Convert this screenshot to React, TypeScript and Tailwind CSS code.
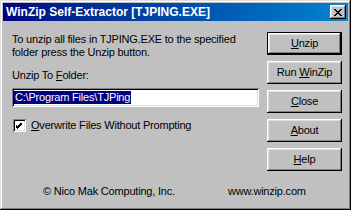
import React from 'react';

const font = "font-['Liberation_Sans',Arial,sans-serif]";

// Classic raised 3D button face
const Btn = ({ children, isDefault }: { children: React.ReactNode; isDefault?: boolean }) => (
  <div className={isDefault ? 'h-[23px] w-[75px] border border-black' : 'h-[23px] w-[75px]'}>
    <div className="flex h-full w-full items-center justify-center bg-[#c0c0c0] text-[11px] tracking-[-0.2px] text-black shadow-[inset_-1px_-1px_#000,inset_1px_1px_#fff,inset_-2px_-2px_#808080,inset_2px_2px_#dfdfdf]">
      <span>{children}</span>
    </div>
  </div>
);

const U = ({ children }: { children: React.ReactNode }) => <span className="underline underline-offset-[1px]">{children}</span>;

export default function App() {
  return (
    <div className={`${font} flex h-[210px] w-[351px] flex-col bg-[#c0c0c0] p-[3px] shadow-[inset_-1px_-1px_#000,inset_1px_1px_#dfdfdf,inset_-2px_-2px_#808080,inset_2px_2px_#fff] select-none`}>
      {/* Title bar */}
      <div className="flex h-[18px] items-center bg-gradient-to-r from-[#000080] to-[#1084d0] pl-[3px] pr-[2px]">
        <span className="flex-1 text-[12px] leading-none font-bold text-white">WinZip Self-Extractor [TJPING.EXE]</span>
        <div className="flex h-[14px] w-[16px] items-center justify-center bg-[#c0c0c0] shadow-[inset_-1px_-1px_#000,inset_1px_1px_#fff,inset_-2px_-2px_#808080,inset_2px_2px_#dfdfdf]">
          <svg width="8" height="7" viewBox="0 0 8 7" shapeRendering="crispEdges">
            <path d="M0 0h2v1h-2zM6 0h2v1h-2zM1 1h2v1h-2zM5 1h2v1h-2zM2 2h4v1h-4zM3 3h2v1h-2zM2 4h4v1h-4zM1 5h2v1h-2zM5 5h2v1h-2zM0 6h2v1h-2zM6 6h2v1h-2z" fill="#000" />
          </svg>
        </div>
      </div>

      {/* Body */}
      <div className="flex flex-1">
        <div className="flex flex-1 flex-col pl-[9px] pt-[12px] pr-[6px] text-[11px] leading-[13px] tracking-[-0.2px] text-black">
          <p>To unzip all files in TJPING.EXE to the specified</p>
          <p>folder press the Unzip button.</p>
          <p className="mt-[10px]">Unzip To <U>F</U>older:</p>
          <div className="mt-[6px] flex h-[19px] w-[247px] items-center bg-white pl-[2px] shadow-[inset_1px_1px_#808080,inset_-1px_-1px_#fff,inset_2px_2px_#000,inset_-2px_-2px_#dfdfdf]">
            <span className="bg-[#000080] px-[1px] leading-[13px] text-white">C:\Program Files\TJPing</span>
          </div>
          <div className="mt-[12px] flex items-center gap-[5px] pl-[1px]">
            <div className="flex h-[13px] w-[13px] items-center justify-center bg-white shadow-[inset_1px_1px_#808080,inset_-1px_-1px_#fff,inset_2px_2px_#000,inset_-2px_-2px_#dfdfdf]">
              <svg width="7" height="7" viewBox="0 0 7 7" shapeRendering="crispEdges">
                <path d="M6 0v3h-1v1h-1v1h-1v1h-1v1h-1v-1h-1v-1h-1v-3h1v1h1v1h1v-1h1v-1h1v-1h1z" fill="#000" />
              </svg>
            </div>
            <span><U>O</U>verwrite Files Without Prompting</span>
          </div>
        </div>
        <div className="mr-[6px] flex flex-col gap-[6px] pt-[11px]">
          <Btn isDefault><U>U</U>nzip</Btn>
          <Btn>Run <U>W</U>inZip</Btn>
          <Btn><U>C</U>lose</Btn>
          <Btn><U>A</U>bout</Btn>
          <Btn><U>H</U>elp</Btn>
        </div>
      </div>

      {/* Footer */}
      <div className="flex h-[22px] pb-[9px] text-[11px] leading-[13px] tracking-[-0.2px] text-black">
        <span className="ml-[40px]">© Nico Mak Computing, Inc.</span>
        <span className="ml-[53px]">www.winzip.com</span>
      </div>
    </div>
  );
}
